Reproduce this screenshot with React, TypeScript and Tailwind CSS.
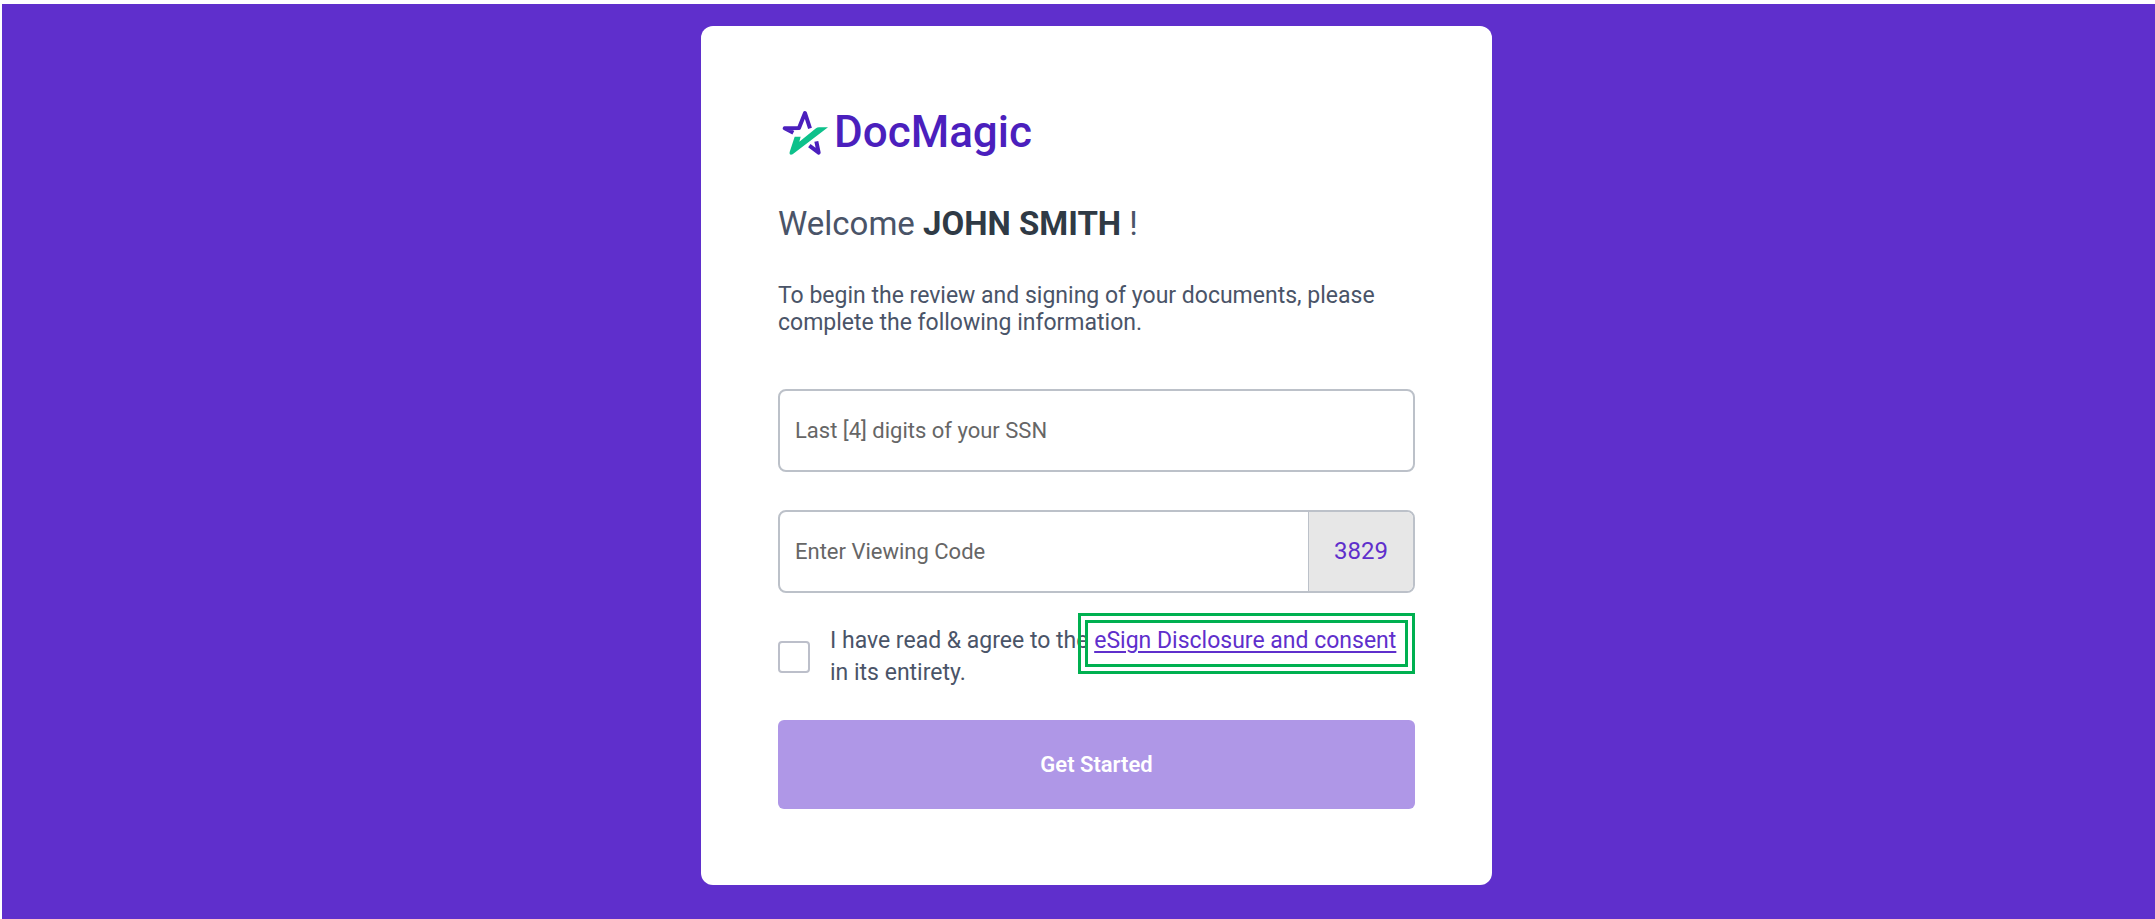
const PLACEHOLDER = "text-[22px] placeholder:text-[#666666] placeholder:opacity-100";

function Logo() {
  return (
    <div className="flex h-[58px] items-center gap-0.5 pl-0.5 text-[#4b1fbd]">
      <svg viewBox="0 0 156 156" className="size-[52px] shrink-0" aria-hidden="true">
        <g fill="none" stroke="currentColor" strokeWidth="12" strokeLinejoin="round">
          <path d="M40 80 L14 67 L57 66 L75 21 L90 67" />
          <path d="M88 119 L116 140 L109 106" />
        </g>
        <path
          d="M144 64 L117 64 Q112 64 108 67 L58 107 L62 92 L44 92 L29 138 Q27 149 38 145 Z"
          fill="#0dc18b"
        />
      </svg>
      <span className="text-[44px] leading-none font-medium">DocMagic</span>
    </div>
  );
}

export default function App() {
  return (
    <div className="min-h-screen bg-white pt-1 pl-0.5 font-['Roboto',sans-serif] text-[23px] leading-[27px] text-[#4a5468]">
      <div className="flex min-h-[calc(100vh-4px)] items-start justify-center bg-[#5f2fcc] pt-[22px] pb-[34px] pl-9">
        <main className="w-full max-w-[791px] rounded-xl bg-white px-[77px] pt-[77px] pb-[76px]">
          <Logo />

          <h1 className="mt-[43px] text-[33px] leading-[40px]">
            Welcome <strong className="font-bold text-[#2f3a45]">JOHN SMITH</strong> !
          </h1>

          <p className="mt-[38px]">
            To begin the review and signing of your documents, please complete the following
            information.
          </p>

          <form className="mt-[53px]" onSubmit={(e) => e.preventDefault()}>
            <input
              type="text"
              aria-label="Last [4] digits of your SSN"
              placeholder="Last [4] digits of your SSN"
              className={`block h-[83px] w-full rounded-lg border-2 border-[#bcc1c9] px-[15px] ${PLACEHOLDER}`}
            />

            <div className="mt-[38px] flex h-[83px] overflow-hidden rounded-lg border-2 border-[#bcc1c9]">
              <input
                type="text"
                aria-label="Enter Viewing Code"
                placeholder="Enter Viewing Code"
                className={`min-w-0 flex-1 px-[15px] ${PLACEHOLDER}`}
              />
              <span className="flex w-[105px] items-center justify-center border-l border-[#bcc1c9] bg-[#e7e7e7] text-[24px] text-[#5f2fcc]">
                3829
              </span>
            </div>

            <div className="mt-[32px] flex items-center gap-5">
              <input
                id="agree"
                type="checkbox"
                className="size-8 shrink-0 appearance-none rounded-sm border-2 border-[#bcbfca] checked:bg-[#5f2fcc]"
              />
              <p className="leading-[32px]">
                <label htmlFor="agree">I have read &amp; agree to the</label>{" "}
                <span className="relative">
                  <a href="#consent" className="text-[#5f2fcc] underline underline-offset-3">
                    eSign Disclosure and consent
                  </a>
                  <span className="pointer-events-none absolute -top-[14px] -right-[19px] -bottom-[20px] -left-[16px] border-3 border-[#00b050] p-1">
                    <span className="block h-full border-3 border-[#00b050]" />
                  </span>
                </span>{" "}
                <label htmlFor="agree">in its entirety.</label>
              </p>
            </div>

            <button
              type="submit"
              className="mt-[31px] h-[89px] w-full rounded-md bg-[#af97e7] text-[22px] font-semibold text-white"
            >
              Get Started
            </button>
          </form>
        </main>
      </div>
    </div>
  );
}
